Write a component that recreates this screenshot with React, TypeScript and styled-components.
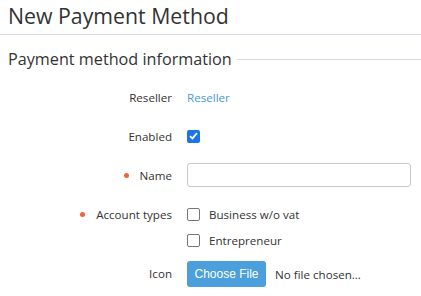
import React from "react";
import styled, { createGlobalStyle } from "styled-components";

const Global = createGlobalStyle`
  html, body { margin: 0; padding: 0; background: #fff; }
  body { font-family: "Open Sans", "Liberation Sans", sans-serif; color: #333; }
`;

const Page = styled.div`
  width: 421px;
`;

const Header = styled.div`
  padding: 1px 8px 0;
  height: 33px;
  border-bottom: 1px solid #d5dce4;
`;

const Title = styled.h1`
  margin: 0;
  font-size: 21.3px;
  font-weight: 400;
  line-height: 30px;
  color: #333;
`;

const Section = styled.section`
  padding: 11px 0 0 8px;
`;

const Legend = styled.div`
  display: flex;
  align-items: center;
  gap: 5px;
  font-size: 16.2px;
  line-height: 26px;
  color: #333;
  &::after {
    content: "";
    flex: 1;
    height: 1px;
    background: #d5dce4;
  }
`;

const Form = styled.div`
  display: grid;
  grid-template-columns: 164px 1fr;
  column-gap: 15px;
  row-gap: 15px;
  margin-top: 13px;
  padding-right: 10px;
  font-size: 11.6px;
`;

const Label = styled.div<{ $required?: boolean }>`
  display: flex;
  justify-content: flex-end;
  align-items: center;
  height: 24px;
  gap: 11px;
  color: #333;
  &::before {
    content: "";
    display: ${(p) => (p.$required ? "block" : "none")};
    width: 5px;
    height: 5px;
    border-radius: 50%;
    background: #f0643c;
  }
`;

const Value = styled.div`
  display: flex;
  align-items: center;
  min-height: 24px;
`;

const Link = styled.a`
  color: #4a9ad8;
  text-decoration: none;
`;

const Check = styled.span<{ $checked?: boolean }>`
  box-sizing: border-box;
  width: 13px;
  height: 13px;
  border-radius: 2px;
  display: inline-flex;
  align-items: center;
  justify-content: center;
  background: ${(p) => (p.$checked ? "#1a73e8" : "#fff")};
  border: ${(p) => (p.$checked ? "none" : "1px solid #767676")};
  flex-shrink: 0;
`;

const Input = styled.input`
  box-sizing: border-box;
  width: 224px;
  height: 24px;
  border: 1px solid #c8c8c8;
  border-radius: 3px;
  outline: none;
`;

const List = styled.div`
  display: flex;
  flex-direction: column;
  gap: 2px;
`;

const Option = styled.label`
  display: flex;
  align-items: center;
  gap: 9px;
  height: 24px;
  color: #333;
`;

const FileRow = styled.div`
  display: flex;
  align-items: center;
  gap: 9px;
  margin-top: -6px;
`;

const FileButton = styled.button`
  box-sizing: border-box;
  height: 26px;
  width: 79px;
  border: none;
  border-radius: 3px;
  background: #4a9fdc;
  color: #fff;
  font-family: "Liberation Sans", Arial, sans-serif;
  font-size: 12px;
  padding: 0;
`;

const FileText = styled.span`
  color: #333;
`;

const Tick = () => (
  <svg width="9" height="8" viewBox="0 0 9 8">
    <path d="M1 4.2 L3.4 6.4 L8 1.2" fill="none" stroke="#fff" strokeWidth="1.8" />
  </svg>
);

export default function App() {
  return (
    <Page>
      <Global />
      <Header>
        <Title>New Payment Method</Title>
      </Header>
      <Section>
        <Legend>Payment method information</Legend>
        <Form>
          <Label>Reseller</Label>
          <Value>
            <Link href="#">Reseller</Link>
          </Value>
          <Label>Enabled</Label>
          <Value>
            <Check $checked>
              <Tick />
            </Check>
          </Value>
          <Label $required>Name</Label>
          <Value>
            <Input />
          </Value>
          <Label $required>Account types</Label>
          <List>
            <Option>
              <Check />
              Business w/o vat
            </Option>
            <Option>
              <Check />
              Entrepreneur
            </Option>
          </List>
          <Label style={{ marginTop: -6 }}>Icon</Label>
          <FileRow>
            <FileButton>Choose File</FileButton>
            <FileText>No file chosen...</FileText>
          </FileRow>
        </Form>
      </Section>
    </Page>
  );
}
